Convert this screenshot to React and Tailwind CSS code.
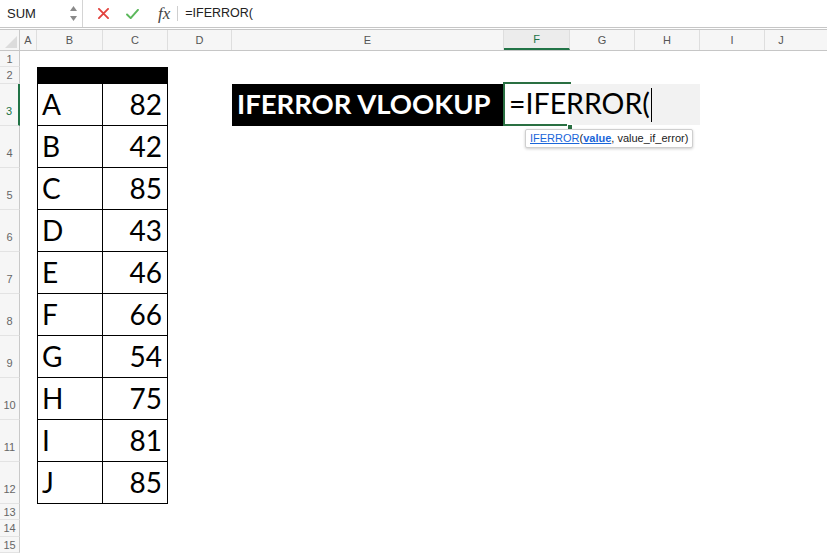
import React from "react";

const COLS = [
  { key: "A", w: "w-[17px]" },
  { key: "B", w: "w-[66px]" },
  { key: "C", w: "w-[65px]" },
  { key: "D", w: "w-[64px]" },
  { key: "E", w: "w-[272px]" },
  { key: "F", w: "w-[66px]" },
  { key: "G", w: "w-[65px]" },
  { key: "H", w: "w-[65px]" },
  { key: "I", w: "w-[65px]" },
];

const DATA = [
  ["A", 82],
  ["B", 42],
  ["C", 85],
  ["D", 43],
  ["E", 46],
  ["F", 66],
  ["G", 54],
  ["H", 75],
  ["I", 81],
  ["J", 85],
];

const sheetFont = { fontFamily: "Lato, 'Open Sans', sans-serif" };
const uiFont = { fontFamily: "'Liberation Sans', Arial, sans-serif" };

const RowHead = ({ n, tall, active }) => (
  <div
    className={`w-[20px] shrink-0 flex justify-center bg-[#f6f6f6] border-b border-[#e3e3e3] text-[11px] leading-[12px] ${
      tall ? "items-end pb-[8px]" : "items-center"
    } ${active ? "border-r-2 border-r-[#217346] text-[#217346]" : "border-r border-r-[#c9c9c9] text-[#666]"}`}
    style={uiFont}
  >
    {n}
  </div>
);

const Blank = ({ w, className = "" }) => <div className={`${w} shrink-0 ${className}`} />;

const TopBar = () => (
  <div className="h-[28px] flex items-stretch border-b border-[#c6c6c6] bg-white" style={uiFont}>
    <div className="w-[83px] shrink-0 flex items-center border-r border-[#d4d4d4] pl-[7px] pr-[5px]">
      <span className="text-[13px] text-[#222] flex-1">SUM</span>
      <div className="flex flex-col gap-[5px] items-center">
        <svg width="7" height="5" viewBox="0 0 7 5">
          <path d="M3.5 0 L7 5 L0 5 Z" fill="#8a8a8a" />
        </svg>
        <svg width="7" height="5" viewBox="0 0 7 5">
          <path d="M0 0 L7 0 L3.5 5 Z" fill="#8a8a8a" />
        </svg>
      </div>
    </div>
    <div className="flex items-center pl-[15px]">
      <svg width="11" height="11" viewBox="0 0 12 12" className="mr-[17px]">
        <path d="M1 1 L11 11 M11 1 L1 11" stroke="#e2423d" strokeWidth="2" strokeLinecap="round" />
      </svg>
      <svg width="13" height="10" viewBox="0 0 14 11" className="mr-[19px]">
        <path d="M1 6 L5 10 L13 1" stroke="#5cb85c" strokeWidth="2.2" fill="none" strokeLinecap="round" strokeLinejoin="round" />
      </svg>
      <span className="italic text-[17px] text-[#444] leading-none mr-[7px]" style={{ fontFamily: "'Liberation Serif', serif" }}>
        fx
      </span>
      <div className="w-px h-[15px] bg-[#cfcfcf] mr-[7px]" />
      <span className="text-[12.5px] text-[#222]">=IFERROR(</span>
    </div>
  </div>
);

const ColHeader = () => (
  <div className="mt-[1px] h-[22px] flex border-t border-b border-[#c6c6c6] bg-[#f6f6f6]" style={uiFont}>
    <div className="w-[20px] shrink-0 border-r border-[#c9c9c9] relative">
      <svg width="12" height="12" viewBox="0 0 12 12" className="absolute right-[2px] bottom-[2px]">
        <path d="M12 0 L12 12 L0 12 Z" fill="#dcdcdc" />
      </svg>
    </div>
    {COLS.map((c) => (
      <div
        key={c.key}
        className={`${c.w} shrink-0 flex items-center justify-center text-[11px] border-r border-[#dedede] ${
          c.key === "F" ? "bg-[#ececec] text-[#217346] border-b-2 border-b-[#217346]" : "text-[#555]"
        }`}
      >
        {c.key}
      </div>
    ))}
    <div className="flex-1 flex items-center justify-center text-[11px] text-[#555] pr-[30px]">J</div>
  </div>
);

const Tail = ({ from }) => (
  <>
    {COLS.slice(from).map((c) => (
      <Blank key={c.key} w={c.w} />
    ))}
    <div className="flex-1" />
  </>
);

const TableCell = ({ w, children, right }) => (
  <div
    className={`${w} shrink-0 flex items-end border-b border-black pb-[7px] text-[28px] leading-none text-black ${
      right ? "justify-end pr-[5px] border-r" : "pl-[4px] border-l border-r"
    }`}
    style={sheetFont}
  >
    {children}
  </div>
);

const Editor = () => (
  <div className="w-[66px] shrink-0 relative">
    <div className="absolute -top-[2px] -left-[1px] w-[68px] h-[44px] border-2 border-r-0 border-[#2a7042]" />
    <div className="absolute -right-[3px] bottom-[-4px] w-[6px] h-[6px] bg-[#2a7042] border border-white z-10" />
    <div
      className="absolute left-[5px] bottom-[9px] flex items-end text-[28.5px] leading-none text-black whitespace-nowrap z-10"
      style={sheetFont}
    >
      =IFERROR(
      <span className="inline-block w-px h-[34px] bg-black ml-[1px] mb-[-5px]" />
    </div>
    <div
      className="absolute left-[21px] top-[45px] z-20 bg-white border border-[#cfcfcf] rounded-[2px] shadow-[0_1px_3px_rgba(0,0,0,0.2)] px-[4px] h-[19px] flex items-center text-[11px] text-[#222] whitespace-nowrap"
      style={uiFont}
    >
      <span className="text-[#1a66d9] underline">IFERROR</span>(
      <span className="text-[#1a66d9] underline font-bold">value</span>, value_if_error)
    </div>
  </div>
);

export default function App() {
  const rows = [];
  rows.push(
    <div key="r1" className="h-[16px] flex">
      <RowHead n={1} />
      <Tail from={0} />
    </div>
  );
  rows.push(
    <div key="r2" className="h-[17px] flex">
      <RowHead n={2} />
      <Blank w="w-[17px]" />
      <div className="w-[131px] shrink-0 bg-black" />
      <Tail from={3} />
    </div>
  );
  DATA.forEach(([l, v], i) => {
    const n = i + 3;
    rows.push(
      <div key={`r${n}`} className="h-[42px] flex">
        <RowHead n={n} tall active={n === 3} />
        <Blank w="w-[17px]" />
        <TableCell w="w-[66px]">{l}</TableCell>
        <TableCell w="w-[65px]" right>
          {v}
        </TableCell>
        {n === 3 ? (
          <>
            <Blank w="w-[64px]" />
            <div
              className="w-[272px] shrink-0 bg-black text-white font-bold text-[27.5px] leading-none flex items-end pl-[5px] pb-[9px] whitespace-nowrap"
              style={sheetFont}
            >
              IFERROR VLOOKUP
            </div>
            <Editor />
            <Blank w="w-[65px]" className="bg-[#f2f2f2] mb-[1px]" />
            <Blank w="w-[65px]" className="bg-[#f2f2f2] mb-[1px]" />
            <Blank w="w-[65px]" />
            <div className="flex-1" />
          </>
        ) : (
          <Tail from={3} />
        )}
      </div>
    );
  });
  [13, 14, 15].forEach((n) => {
    rows.push(
      <div key={`r${n}`} className={`${n === 14 ? "h-[17px]" : "h-[16px]"} flex`}>
        <RowHead n={n} />
        <Tail from={0} />
      </div>
    );
  });

  return (
    <div className="w-[827px] h-[553px] overflow-hidden bg-white">
      <TopBar />
      <ColHeader />
      <div>{rows}</div>
    </div>
  );
}
